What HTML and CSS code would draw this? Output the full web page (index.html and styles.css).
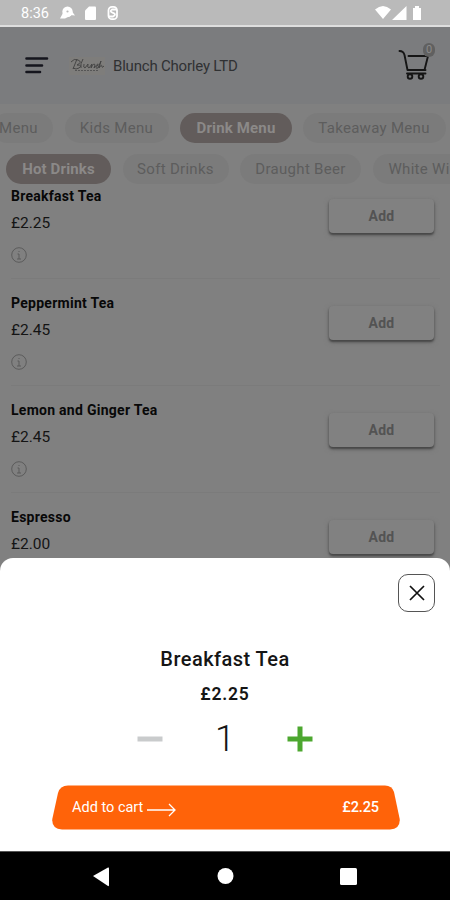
FILE: index.html
```
<!DOCTYPE html>
<html lang="en">
<head>
<meta charset="utf-8">
<title>Blunch Chorley LTD</title>
<link rel="stylesheet" href="styles.css">
</head>
<body>
<div class="phone">
  <div class="status">
    <span class="time">8:36</span>
    <svg class="status-left" width="60" height="16" viewBox="0 0 60 16" fill="#fff">
      <circle cx="7.5" cy="6.8" r="5.2"/><path d="M0 13.500 3 8l7 3-5 2.600zM10 10l5 .5-3-4z"/><circle cx="7.5" cy="6.5" r="1.100" fill="#bbb"/>
      <path d="M29 1.5h6q1 0 1 1V14q0 1-1 1H26q-1 0-1-1V5.5z"/>
      <g fill="none" stroke="#fff" stroke-width="1.8"><rect x="48.500" y="1.8" width="8.500" height="12.400" rx="3.500"/><path d="M57 4.500H52Q49 6.500 53 7.800T53 11.500H49"/></g>
    </svg>
    <svg class="status-right" width="48" height="16" viewBox="0 0 48 16" fill="#fff">
      <path d="M1 4.500Q9-2.500 17 4.500L9 14zM18 15 32.500 1v14zM39 3h2V1h4v2h2v12h-8z"/>
    </svg>
  </div>
  <header class="header">
    <svg class="burger" width="24" height="18" viewBox="0 0 24 18" stroke="#15151d" stroke-width="2.6" stroke-linecap="round"><path d="M1.5 1.500h20.5M1.5 8.500h15.500M1.5 15h13.500"/></svg>
    <svg class="logo" width="36" height="18" viewBox="0 0 36 18" fill="none" stroke="#414141" stroke-width=".9"><rect width="36" height="18" fill="#7e7d7b" stroke="none"/><path d="M2 5Q5 1 9 3q5 2-1 5 6 0 2 3-3 2-6 0M8 2 4 12M14 2q-3 5-2 9M15 7q-1 4 1 4l3-4q-1 4 1 4l3-4-1 4q3-6 4-3l-1 3q5-6 4-3-4 4 0 3l3-7-2 7q3-5 3-1 0 1 2-1"/><path d="M6 13.500h24" stroke="#555" stroke-dasharray="2 1" stroke-width="1"/></svg>
    <span class="brand">Blunch Chorley LTD</span>
    <div class="cart">
      <svg width="36" height="33" viewBox="0 0 36 33" fill="none" stroke="#151515" stroke-width="1.900" stroke-linecap="round" stroke-linejoin="round"><path d="M1.500 6q4 0 5 4l3 15h18M10.500 11h19.500L26.500 25M9 28.500h18.500"/><circle cx="12" cy="31.500" r="2.300"/><circle cx="23" cy="31.500" r="2.300"/></svg>
      <span class="count">0</span>
    </div>
  </header>
  <nav class="chips menus">
    <span class="chip all">Menu</span><span class="chip kids">Kids Menu</span><span class="chip drink active">Drink Menu</span><span class="chip takeaway">Takeaway Menu</span>
  </nav>
  <nav class="chips sections">
    <span class="chip hot active">Hot Drinks</span><span class="chip soft">Soft Drinks</span><span class="chip draught">Draught Beer</span><span class="chip wine">White Wine</span>
  </nav>
  <main class="items">
    <article class="item"><div class="details"><h2>Breakfast Tea</h2><p>£2.25</p><svg class="info" viewBox="0 0 16 16"><circle cx="8" cy="8" r="7.300"/><path d="M6.500 7H8v5M6 12h4M8 4v1"/></svg></div><button class="add">Add</button></article>
    <article class="item"><div class="details"><h2>Peppermint Tea</h2><p>£2.45</p><svg class="info" viewBox="0 0 16 16"><circle cx="8" cy="8" r="7.300"/><path d="M6.500 7H8v5M6 12h4M8 4v1"/></svg></div><button class="add">Add</button></article>
    <article class="item"><div class="details"><h2>Lemon and Ginger Tea</h2><p>£2.45</p><svg class="info" viewBox="0 0 16 16"><circle cx="8" cy="8" r="7.300"/><path d="M6.500 7H8v5M6 12h4M8 4v1"/></svg></div><button class="add">Add</button></article>
    <article class="item"><div class="details"><h2>Espresso</h2><p>£2.00</p></div><button class="add">Add</button></article>
  </main>
  <section class="sheet">
    <div class="sheet-top"><button class="close"><svg width="16" height="16" viewBox="0 0 16 16" stroke="#111" stroke-width="1.700"><path d="M1 1 15 15M15 1 1 15"/></svg></button></div>
    <h1>Breakfast Tea</h1>
    <p class="price">£2.25</p>
    <div class="stepper">
      <svg width="26" height="26" viewBox="0 0 26 26" stroke="#c9cbcc" stroke-width="5"><path d="M0.500 13h25"/></svg>
      <span class="quantity">1</span>
      <svg width="26" height="26" viewBox="0 0 26 26" stroke="#4ca72f" stroke-width="5"><path d="M0.500 13h25M13 .5v25"/></svg>
    </div>
    <div class="checkout">
      <svg class="checkout-shape" width="348" height="45" viewBox="0 0 348 45" fill="#ff6309"><path d="M16 .5H333Q340 .5 342 7L347.700 34Q348.500 44 338 44.500H10Q-.5 44 .3 34L6 8Q8 .5 16 .5Z"/></svg>
      <div class="checkout-content"><span>Add to cart</span><svg class="arrow" width="30" height="14" viewBox="0 0 30 14" fill="none" stroke="#fff" stroke-width="1.300"><path d="M0 7h28M22 1l6 6-6 6"/></svg><span class="total">£2.25</span></div>
    </div>
  </section>
  <footer class="system-nav">
    <svg width="450" height="48" viewBox="0 0 450 48" fill="#fff"><path d="M93 24 108 15.500Q109 15 109 16.500v16.500q0 1.500-1 1z"/><circle cx="225.500" cy="24" r="8"/><rect x="340" y="16" width="17" height="17" rx="1.500"/></svg>
  </footer>
</div>
</body>
</html>
```
FILE: styles.css
```
* { box-sizing: border-box; }
body { margin: 0; font-family: Roboto, sans-serif; }
h1, h2, p { margin: 0; }
button { font-family: inherit; padding: 0; }
svg { display: block; flex: none; }
.phone { position: relative; width: 450px; height: 900px; overflow: hidden; background: #808080; display: flex; flex-direction: column; }
.status { height: 27px; flex: none; display: flex; align-items: center; padding: 0 28px 0 21px; background: #bababa; border-bottom: 2px solid #dedede; color: #fff; }
.time { width: 39px; font-size: 14.5px; line-height: 25px; padding-top: 2px; }
.status-right { margin-left: auto; }
.header { height: 77px; flex: none; display: flex; align-items: center; background: #7b7c7e; padding: 0 14px 0 25px; }
.logo { margin: 0 8px 0 20px; }
.brand { font-size: 15px; line-height: 20px; letter-spacing: -.2px; color: #303133; }
.cart { position: relative; margin-left: auto; width: 38px; height: 42px; }
.cart svg { overflow: visible; }
.count { position: absolute; right: 1px; top: -2px; width: 12px; height: 14px; border-radius: 6px; background: #606060; color: #8a8a8a; font-size: 11px; line-height: 14px; text-align: center; }
.chips { flex: none; display: flex; height: 30px; gap: 11.5px; white-space: nowrap; }
.menus { margin-top: 9px; margin-left: -8px; }
.sections { margin-top: 11px; margin-left: 6px; }
.chip { flex: none; display: flex; align-items: center; justify-content: center; border-radius: 15px; background: #7b7b7b; color: #5d5d5d; font-size: 15px; letter-spacing: .3px; }
.active { background: #625c5b; color: #8b8988; font-weight: 700; letter-spacing: .15px; }
.all { width: 61px; justify-content: flex-start; padding-left: 7px; }
.kids { width: 104px; }
.drink { width: 112px; }
.takeaway { width: 143px; margin-left: -1px; }
.hot { width: 105px; }
.soft { width: 106px; }
.draught { width: 121px; }
.wine { width: 110px; }
.items { flex: none; padding: 0 10px 0 11px; }
.item { height: 107px; display: flex; justify-content: space-between; padding: 3px 6px 0 0; border-bottom: 1px solid #7b7b7b; }
.item:first-child { height: 95px; padding-top: 0; }
.item:first-child .details { margin-top: 2px; }
.item + .item .details { margin-top: 11px; }
.item + .item .add { margin-top: 24px; }
.details h2 { font-size: 14px; line-height: 20px; font-weight: 700; color: #080808; letter-spacing: .27px; }
.details p { font-size: 15.5px; line-height: 20px; margin-top: 7px; color: #141414; }
.info { width: 16px; height: 16px; margin-top: 14px; fill: none; stroke: #5b5b5b; stroke-width: 1; }
.add { width: 105px; height: 34px; margin-top: 15px; border: 0; border-radius: 4px; background: #818181; color: #535353; font-size: 14px; font-weight: 700; letter-spacing: .3px; box-shadow: 0 2px 2px #484848, 0 2px 5px #666; }
.sheet { position: absolute; left: 0; right: 0; top: 558px; height: 293px; border-radius: 13px 13px 0 0; background: #fff; display: flex; flex-direction: column; align-items: center; color: #151515; }
.sheet-top { align-self: stretch; display: flex; justify-content: flex-end; padding: 16px 15px 0 0; }
.close { width: 37px; height: 38px; border: 1px solid #555; border-radius: 10px; background: #fff; display: flex; align-items: center; justify-content: center; }
h1 { margin-top: 33px; font-size: 20px; line-height: 28px; font-weight: 500; letter-spacing: .45px; }
.price { margin-top: 8px; font-size: 17.500px; line-height: 26px; font-weight: 600; letter-spacing: .8px; }
.stepper { margin-top: 10px; width: 176px; height: 44px; display: flex; align-items: center; justify-content: space-between; }
.quantity { font-size: 36px; line-height: 44px; font-weight: 300; }
.checkout { position: relative; left: 1px; margin-top: 24px; width: 348px; height: 45px; color: #fff; }
.checkout-shape { position: absolute; inset: 0; }
.checkout-content { position: relative; height: 45px; padding: 0 21px 0 20px; display: flex; align-items: center; font-size: 14.500px; }
.arrow { margin: 5px 0 0 4px; }
.total { margin-left: auto; font-weight: 500; letter-spacing: -.1px; }
.system-nav { position: absolute; bottom: 0; left: 0; width: 450px; height: 49px; background: #000; border-top: 1px solid #555; }
```
